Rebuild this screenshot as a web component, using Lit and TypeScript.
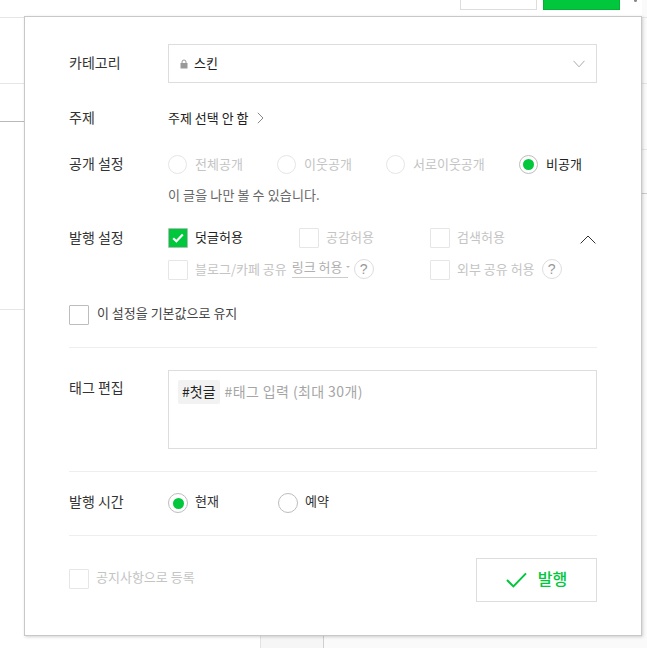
import { LitElement, html, css } from "lit";
import { customElement } from "lit/decorators.js";

@customElement("app-root")
export class AppRoot extends LitElement {
  static styles = css`
    :host { display: block; position: relative; width: 647px; height: 648px; overflow: hidden; background: #fff;
      font-family: "Noto Sans CJK KR", "Noto Sans", sans-serif; font-size: 13px; color: #333; }
    * { box-sizing: border-box; }

    .bg { height: 648px; display: grid; grid-template-rows: 1fr 13px; background: #fff; }
    .bg-mid { display: flex; justify-content: space-between; }
    .bg-left { width: 24px; }
    .bg-right { width: 5px; background: #fafafa; }
    .line { border-bottom: 1px solid #e6e6e6; }
    .line.dark { border-bottom-color: #b9b9b9; }
    .line.mid { border-bottom-color: #ccc; }
    .l1 { height: 18px; } .l2 { height: 66px; } .l3 { height: 38px; } .l4 { height: 188px; }
    .r1 { height: 18px; } .r2 { height: 66px; } .r3 { height: 66px; } .r4 { height: 44px; }
    .bg-foot { display: flex; }
    .foot-a { width: 260px; }
    .foot-b { width: 64px; background: #f6f6f6; border-left: 1px solid #e2e2e2; border-right: 1px solid #cfcfcf; }
    .foot-c { flex: 1; background: #fafafa; }
    .topbar { position: absolute; top: 0; left: 460px; display: flex; gap: 6px; }
    .btn-white { width: 77px; height: 10px; background: #fff; border: 1px solid #ddd; border-top: 0; }
    .btn-green { width: 77px; height: 10px; background: #00c73c; border: 1px solid #02b236; border-top: 0; }
    .dot { position: absolute; top: -1px; left: 634px; width: 3px; height: 3px; border-radius: 50%; background: #888; }

    .panel { position: absolute; left: 24px; top: 16px; width: 618px; height: 620px; background: #fff;
      border: 1px solid #c8c8c8; box-shadow: 1px 1px 3px rgba(0,0,0,.18); padding: 27px 44px 0 44px; }

    .row { display: flex; align-items: center; }
    .label { width: 99px; flex: none; font-size: 14px; line-height: 20px; color: #333; margin-bottom: 2px; }
    .label.s2 { margin-bottom: 4px; }

    .s1 { margin-bottom: 2px; }
    .s2 { margin-bottom: 4px; }

    .select { flex: 1; height: 39px; border: 1px solid #ddd; display: flex; align-items: center; padding: 0 11px 0 11px; justify-content: space-between; }
    .sel-l { display: flex; align-items: center; gap: 6px; color: #222; line-height: 20px; }
    .r-topic { margin-top: 25px; height: 20px; }
    .topic { display: flex; align-items: center; gap: 8px; color: #222; line-height: 20px; }
    .r-open { margin-top: 27px; height: 19px; }
    .radios { display: grid; grid-template-columns: 109px 109px 133px auto; }
    .rad-item { display: flex; align-items: center; gap: 8px; line-height: 19px; color: #c4c4c4; white-space: nowrap; }
    .rad-item.on { color: #222; }
    .radio { width: 19px; height: 19px; border-radius: 50%; border: 1px solid #e6e6e6; flex: none; background: #fff; display: flex; align-items: center; justify-content: center; }
    .radio.act { border-color: #bdbdbd; }
    .radio.on { border-color: #bdbdbd; }
    .radio.on::after { content: ""; width: 11px; height: 11px; border-radius: 50%; background: #00c73c; }
    .sub { margin: 11px 0 0 99px; height: 20px; line-height: 20px; color: #666; letter-spacing: .12px; }

    .r-pub { margin-top: 23px; height: 20px; }
    .checks { flex: 1; display: flex; align-items: center; }
    .chk-item { width: 131px; display: flex; align-items: center; gap: 7px; line-height: 20px; color: #c4c4c4; white-space: nowrap; flex: none; }
    .chk-item.on { color: #222; }
    .chk { width: 20px; height: 20px; border: 1px solid #e6e6e6; flex: none; background: #fff; border-radius: 1px; }
    .chk.dark { border-color: #bdbdbd; }
    .chk.on { border-color: #aebfb3; background: #00c73c; display: flex; align-items: center; justify-content: center; }
    .up-chev { margin-left: auto; margin-right: 1px; display: block; margin-bottom: -2px; }
    .r-pub2 { margin: 12px 0 0 99px; height: 20px; display: flex; align-items: center; }
    .blog { width: 262px; }
    .link { color: #b0b0b0; border-bottom: 1px solid #ccc; height: 19px; padding-bottom: 2px; line-height: 16px; width: 56px; margin: 0 0 3px -2px; white-space: nowrap; display: flex; align-items: center; gap: 3px; }
    .caret { width: 0; height: 0; border-left: 2.5px solid transparent; border-right: 2.5px solid transparent; border-top: 2px solid #bbb; }
    .q { width: 20px; height: 20px; border-radius: 50%; border: 1px solid #ddd; color: #999; display: flex; align-items: center; justify-content: center; font-size: 14px; line-height: 18px; flex: none; margin-top: -2px; font-family: "Liberation Sans", sans-serif; }
    .q.near { margin-left: -1px; }
    .r-keep { margin-top: 25px; height: 20px; gap: 8px; line-height: 20px; color: #444; }

    .hr { height: 1px; background: #eee; margin-top: 22px; }
    .r-tag { margin-top: 22px; display: flex; align-items: flex-start; }
    .r-tag .label { margin-top: 7px; margin-bottom: 0; }
    .tagbox { flex: 1; height: 79px; border: 1px solid #ddd; padding: 9px; display: flex; align-items: flex-start; gap: 5px; font-size: 14px; }
    .tag { background: #f2f2f2; height: 24px; line-height: 22px; padding: 0 4px; color: #222; border-radius: 2px; }
    .ph { line-height: 22px; color: #a5a5a5; letter-spacing: .4px; }
    .r-time { margin-top: 21px; height: 20px; }
    .times { display: grid; grid-template-columns: 110px auto; }
    .times .rad-item { line-height: 20px; color: #333; gap: 7px; }
    .times .radio { width: 20px; height: 20px; }
    .r-foot { margin-top: 22px; height: 44px; display: flex; justify-content: space-between; align-items: center; }
    .notice { display: flex; align-items: center; gap: 7px; color: #c4c4c4; line-height: 20px; margin-bottom: 2px; }
    .publish { width: 121px; height: 44px; border: 1px solid #ddd; background: #fff; display: flex; align-items: center; justify-content: center; gap: 11px; color: #00c73c; font-size: 16px; font-weight: 500; padding: 0; font-family: inherit; }
    .publish svg { margin-bottom: 1px; }
    .publish span { line-height: 22px; margin-bottom: 5px; }
  `;

  private radio(label: string, on = false, shift = "s1") {
    return html`<div class="rad-item ${on ? "on" : ""}">
      <span class="radio ${on ? "on" : ""}"></span><span class=${shift}>${label}</span>
    </div>`;
  }

  private check(label: string, on = false) {
    return html`<div class="chk-item ${on ? "on" : ""}">
      <span class="chk ${on ? "on" : ""}">
        ${on ? html`<svg width="12" height="10" viewBox="0 0 12 10"><path d="M1.2 5.2 4.4 8.3 10.8 1.6" fill="none" stroke="#fff" stroke-width="2.2"/></svg>` : ""}
      </span><span class="s1">${label}</span>
    </div>`;
  }

  render() {
    return html`
      <div class="bg">
        <div class="bg-mid">
          <div class="bg-left">
            <div class="line l1"></div><div class="line l2"></div><div class="line dark l3"></div><div class="line l4"></div>
          </div>
          <div class="bg-right">
            <div class="line r1"></div><div class="line r2"></div><div class="line r3"></div><div class="line mid r4"></div>
          </div>
        </div>
        <div class="bg-foot"><div class="foot-a"></div><div class="foot-b"></div><div class="foot-c"></div></div>
      </div>
      <div class="topbar"><div class="btn-white"></div><div class="btn-green"></div></div>
      <div class="dot"></div>

      <div class="panel">
        <div class="row">
          <div class="label s2">카테고리</div>
          <div class="select">
            <div class="sel-l">
              <svg width="8" height="10" viewBox="0 0 8 10"><path d="M2 4V3a2 2 0 0 1 4 0v1" fill="none" stroke="#999" stroke-width="1"/><rect x="0.5" y="4" width="7" height="5.5" fill="#999"/></svg>
              <span class="s1">스킨</span>
            </div>
            <svg width="12" height="8" viewBox="0 0 12 8"><path d="M.5.8 6 6.8 11.5.8" fill="none" stroke="#aaa" stroke-width="1"/></svg>
          </div>
        </div>

        <div class="row r-topic">
          <div class="label">주제</div>
          <div class="topic">주제 선택 안 함
            <svg width="7" height="12" viewBox="0 0 7 12"><path d="M.8.8 6 6 .8 11.2" fill="none" stroke="#888" stroke-width="1"/></svg>
          </div>
        </div>

        <div class="row r-open">
          <div class="label s2">공개 설정</div>
          <div class="radios">
            ${this.radio("전체공개")}${this.radio("이웃공개")}${this.radio("서로이웃공개")}${this.radio("비공개", true)}
          </div>
        </div>
        <div class="sub">이 글을 나만 볼 수 있습니다.</div>

        <div class="row r-pub">
          <div class="label">발행 설정</div>
          <div class="checks">
            ${this.check("덧글허용", true)}${this.check("공감허용")}${this.check("검색허용")}
            <svg class="up-chev" width="16" height="9" viewBox="0 0 16 9"><path d="M.6 8.4 8 1 15.4 8.4" fill="none" stroke="#333" stroke-width="1"/></svg>
          </div>
        </div>
        <div class="r-pub2">
          <div class="chk-item blog">
            <span class="chk"></span><span class="s1">블로그/카페 공유</span>
            <span class="link">링크 허용<i class="caret"></i></span>
            <span class="q near">?</span>
          </div>
          <div class="chk-item">
            <span class="chk"></span><span class="s1">외부 공유 허용</span>
            <span class="q">?</span>
          </div>
        </div>

        <div class="row r-keep"><span class="chk dark"></span><span class="s2">이 설정을 기본값으로 유지</span></div>
        <div class="hr"></div>

        <div class="r-tag">
          <div class="label">태그 편집</div>
          <div class="tagbox"><span class="tag">#첫글</span><span class="ph">#태그 입력 (최대 30개)</span></div>
        </div>
        <div class="hr"></div>

        <div class="row r-time">
          <div class="label s2">발행 시간</div>
          <div class="times">${this.radio("현재", true, "s2")}<div class="rad-item"><span class="radio act"></span><span class="s2">예약</span></div></div>
        </div>
        <div class="hr"></div>

        <div class="r-foot">
          <div class="notice"><span class="chk"></span><span class="s2">공지사항으로 등록</span></div>
          <button class="publish">
            <svg width="21" height="16" viewBox="0 0 21 16"><path d="M1 8 7.4 14.4 20 1.4" fill="none" stroke="#00c73c" stroke-width="2"/></svg>
            <span>발행</span>
          </button>
        </div>
      </div>
    `;
  }
}
